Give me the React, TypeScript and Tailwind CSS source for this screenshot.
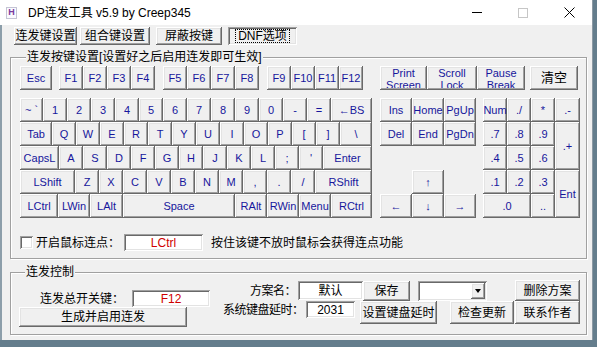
import React from "react";

const bevel =
  "shadow-[inset_-1px_-1px_0_#696969,inset_1px_1px_0_#ffffff,inset_-2px_-2px_0_#a0a0a0,inset_2px_2px_0_#e3e3e3]";
const sunken =
  "shadow-[inset_1px_1px_0_#a0a0a0,inset_-1px_-1px_0_#ffffff,inset_2px_2px_0_#696969,inset_-2px_-2px_0_#e3e3e3]";
const etched = "border border-[#a0a0a0] shadow-[inset_1px_1px_0_#ffffff,1px_1px_0_#ffffff]";

type K = [string, string?];

const Key: React.FC<{ label: React.ReactNode; size?: string; cls?: string }> = ({
  label,
  size = "w-[24px] h-[24px]",
  cls = "",
}) => (
  <div
    className={`${size} ${bevel} ${cls} bg-[#f0f0f0] flex items-center justify-center overflow-hidden whitespace-nowrap text-[11px] text-[#16169c]`}
  >
    {label}
  </div>
);

const Btn: React.FC<{ children: React.ReactNode; cls: string }> = ({ children, cls }) => (
  <div className={`${bevel} ${cls} bg-[#f0f0f0] flex items-center justify-center whitespace-nowrap text-[12px] text-black`}>
    {children}
  </div>
);

const Edit: React.FC<{ children?: React.ReactNode; cls: string; red?: boolean }> = ({ children, cls, red }) => (
  <div
    className={`${sunken} ${cls} bg-white flex items-center justify-center whitespace-nowrap text-[12px] ${
      red ? "text-[#d00000]" : "text-black"
    }`}
  >
    {children}
  </div>
);

const std = (s: string): K[] => s.split(" ").map((l) => [l]);

const rows: K[][] = [
  [["~ `", "w-[23px] h-[24px]"], ...std("1 2 3 4 5 6 7 8 9 0 - ="), ["←BS", "w-[41px] h-[24px]"]],
  [["Tab", "w-[32px] h-[24px]"], ...std("Q W E R T Y U I O P [ ]"), ["\\", "w-[32px] h-[24px]"]],
  [["CapsL", "w-[39px] h-[24px]"], ...std("A S D F G H J K L ; '"), ["Enter", "w-[49px] h-[24px]"]],
  [["LShift", "w-[55px] h-[24px]"], ...std("Z X C V B N M , . /"), ["RShift", "w-[57px] h-[24px]"]],
  [
    ["LCtrl", "w-[38px] h-[24px]"],
    ["LWin", "w-[32px] h-[24px]"],
    ["LAlt", "w-[33px] h-[24px]"],
    ["Space", "w-[112px] h-[24px]"],
    ["RAlt", "w-[32px] h-[24px]"],
    ["RWin", "w-[32px] h-[24px]"],
    ["Menu", "w-[32px] h-[24px]"],
    ["RCtrl", "w-[41px] h-[24px]"],
  ],
];

const TwoLine: React.FC<{ a: string; b: string; w: string }> = ({ a, b, w }) => (
  <div className={`${w} h-[24px] ${bevel} bg-[#f0f0f0] pt-[1px] pb-[2px]`}>
    <div className="h-full overflow-hidden flex flex-col items-center text-[11px] leading-[12px] text-[#16169c]">
      <span>{a}</span>
      <span>{b}</span>
    </div>
  </div>
);

export default function App() {
  return (
    <div className="w-[597px] h-[347px] bg-[#647d8c] overflow-hidden font-['Liberation_Sans','Noto_Sans_CJK_SC',sans-serif] text-black">
      <div className="w-[593px] h-[340px] bg-[#f0f0f0] flex flex-col border-r border-[#8c99a3]">
        {/* title bar */}
        <div className="h-[25px] bg-white flex items-center shrink-0">
          <div className="ml-[6px] w-[11px] h-[12px] border border-[#c4c4d4] bg-[#fafaff] flex items-center justify-center text-[9px] leading-none font-bold text-[#7b3c9e]">
            H
          </div>
          <span className="ml-[11px] text-[12px] leading-none">DP连发工具 v5.9 by Creep345</span>
          <div className="ml-auto flex h-full">
            <div className="w-[46px] flex items-center justify-center">
              <div className="w-[10px] h-px bg-black" />
            </div>
            <div className="w-[46px] flex items-center justify-center">
              <div className="w-[10px] h-[10px] border border-[#c6c6c6]" />
            </div>
            <div className="w-[46px] flex items-center justify-center">
              <svg width="11" height="11" viewBox="0 0 11 11">
                <path d="M0.5 0.5L10.5 10.5M10.5 0.5L0.5 10.5" stroke="#000" strokeWidth="1" />
              </svg>
            </div>
          </div>
        </div>

        <div className="flex-1 shadow-[inset_2px_0_0_#8c9eaa]">
          {/* tab buttons */}
          <div className="mt-[2px] flex h-[18px]">
            <Btn cls="ml-[14px] w-[63px]">连发键设置</Btn>
            <Btn cls="ml-[3px] w-[70px]">组合键设置</Btn>
            <Btn cls="ml-[6px] w-[66px]">屏蔽按键</Btn>
            <div className={`ml-[6px] w-[69px] ${sunken} flex items-center justify-center text-[12px]`}>
              <span className="border border-dotted border-black px-[2px] leading-[12px]">DNF选项</span>
            </div>
          </div>

          {/* key group */}
          <fieldset className={`mt-[5px] ml-[10px] w-[577px] ${etched} pl-[9px] pt-[2px] pb-[7px]`}>
            <legend className="ml-[6px] px-[1px] bg-[#f0f0f0] text-[12px] leading-[14px]">
              连发按键设置[设置好之后启用连发即可生效]
            </legend>

            <div className="flex h-[24px]">
              <Key label="Esc" size="w-[32px] h-[24px]" />
              <div className="ml-[7px] flex">
                {["F1", "F2", "F3", "F4"].map((k) => (
                  <Key key={k} label={k} />
                ))}
              </div>
              <div className="ml-[8px] flex">
                {["F5", "F6", "F7", "F8"].map((k) => (
                  <Key key={k} label={k} />
                ))}
              </div>
              <div className="ml-[8px] flex">
                {["F9", "F10", "F11", "F12"].map((k) => (
                  <Key key={k} label={k} />
                ))}
              </div>
              <div className="ml-[17px] flex">
                <TwoLine a="Print" b="Screen" w="w-[47px]" />
                <TwoLine a="Scroll" b="Lock" w="w-[50px]" />
                <TwoLine a="Pause" b="Break" w="w-[48px]" />
              </div>
              <Btn cls="ml-[5px] w-[48px] h-[24px] text-[13px]">清空</Btn>
            </div>

            <div className="mt-[8px] flex">
              <div className="flex flex-col">
                {rows.map((r, i) => (
                  <div key={i} className="flex">
                    {r.map(([l, s], j) => (
                      <Key key={j} label={l} size={s} />
                    ))}
                  </div>
                ))}
              </div>

              <div className="ml-[8px] grid grid-cols-[repeat(3,32px)] grid-rows-[repeat(5,24px)]">
                {["Ins", "Home", "PgUp", "Del", "End", "PgDn"].map((k) => (
                  <Key key={k} label={k} size="" />
                ))}
                <Key label="↑" size="" cls="col-start-2 row-start-4" />
                <Key label="←" size="" cls="col-start-1 row-start-5" />
                <Key label="↓" size="" cls="col-start-2 row-start-5" />
                <Key label="→" size="" cls="col-start-3 row-start-5" />
              </div>

              <div className="ml-[7px] grid grid-cols-[24px_24px_24px_25px] grid-rows-[repeat(5,24px)]">
                {["Num", "./", "*", ".-", ".7", ".8", ".9"].map((k) => (
                  <Key key={k} label={k} size="" />
                ))}
                <Key label=".+" size="" cls="row-span-2" />
                {[".4", ".5", ".6", ".1", ".2", ".3"].map((k) => (
                  <Key key={k} label={k} size="" />
                ))}
                <Key label="Ent" size="" cls="row-span-2" />
                <Key label=".0" size="" cls="col-span-2" />
                <Key label=".." size="" />
              </div>
            </div>

            <div className="mt-[16px] flex items-center h-[17px] text-[12px]">
              <div className={`w-[13px] h-[13px] bg-white ${sunken}`} />
              <span className="ml-[3px] w-[88px] whitespace-nowrap">开启鼠标连点：</span>
              <Edit cls="w-[79px] h-[17px] text-[11px]" red>
                LCtrl
              </Edit>
              <span className="ml-[8px] whitespace-nowrap">按住该键不放时鼠标会获得连点功能</span>
            </div>
          </fieldset>

          {/* control group */}
          <fieldset className={`mt-[6px] ml-[10px] w-[577px] ${etched} pl-[8px] pb-[7px]`}>
            <legend className="ml-[6px] px-[1px] bg-[#f0f0f0] text-[12px] leading-[14px]">连发控制</legend>
            <div className="flex text-[12px]">
              <div className="flex flex-col">
                <div className="mt-[11px] flex items-center h-[17px]">
                  <span className="ml-[21px] w-[92px] whitespace-nowrap">连发总开关键：</span>
                  <Edit cls="w-[78px] h-[17px]" red>
                    F12
                  </Edit>
                </div>
                <Btn cls="w-[168px] h-[20px]">生成并启用连发</Btn>
              </div>

              <div className="ml-[13px] flex flex-col">
                <div className="mt-[1px] flex items-center h-[21px]">
                  <span className="w-[75px] text-right pr-[2px] whitespace-nowrap tracking-[-0.5px]">方案名：</span>
                  <Edit cls="w-[65px] h-[19px]">默认</Edit>
                  <Btn cls="w-[47px] h-[20px]">保存</Btn>
                  <div className={`ml-[8px] w-[69px] h-[20px] bg-white ${sunken} flex justify-end items-center pr-[2px]`}>
                    <div className={`w-[14px] h-[16px] ${bevel} bg-[#f0f0f0] flex items-center justify-center`}>
                      <div className="w-0 h-0 border-l-[3.5px] border-r-[3.5px] border-t-[4px] border-l-transparent border-r-transparent border-t-black" />
                    </div>
                  </div>
                  <Btn cls="ml-[28px] w-[65px] h-[21px]">删除方案</Btn>
                </div>
                <div className="flex items-start h-[23px]">
                  <span className="w-[83px] h-[17px] flex items-center whitespace-nowrap tracking-[-0.5px]">
                    系统键盘延时：
                  </span>
                  <Edit cls="w-[49px] h-[17px]">2031</Edit>
                  <Btn cls="ml-[5px] w-[77px] h-[23px]">设置键盘延时</Btn>
                  <Btn cls="ml-[13px] w-[64px] h-[23px]">检查更新</Btn>
                  <Btn cls="ml-[1px] w-[65px] h-[23px]">联系作者</Btn>
                </div>
              </div>
            </div>
          </fieldset>
        </div>
      </div>
    </div>
  );
}
